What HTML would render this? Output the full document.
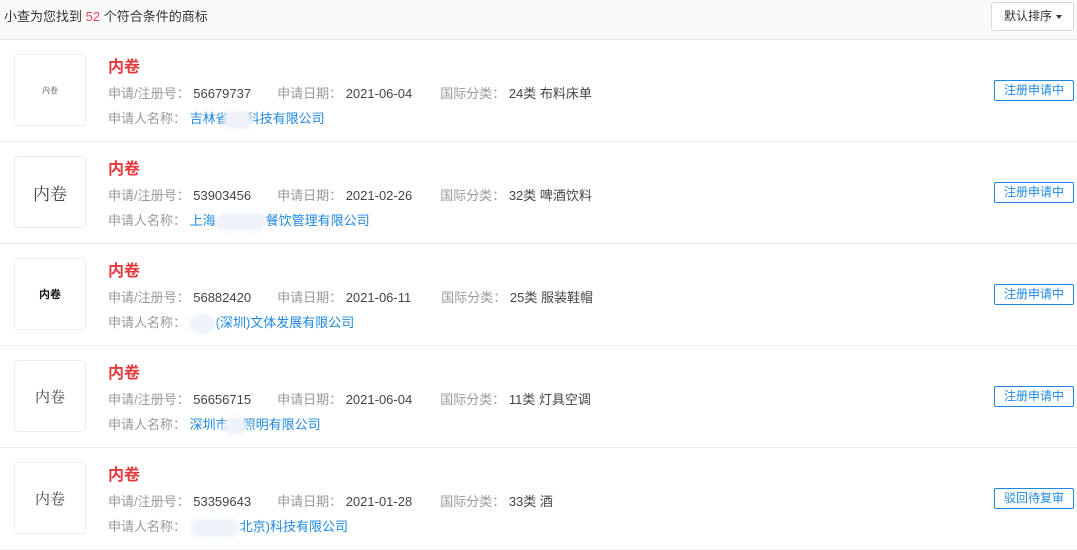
<!DOCTYPE html>
<html><head><meta charset="utf-8"><style>
*{margin:0;padding:0;box-sizing:border-box}
body{width:1077px;height:526px;overflow:hidden;background:#fff;font-family:"Liberation Sans","Noto Sans CJK SC",sans-serif;font-size:13px;color:#333}
.hd{height:40px;background:#fafafa;border-bottom:1px solid #e8e8e8;position:relative}
.hd .t{position:absolute;left:4px;top:6px;font-size:13px;color:#333}
.hd .t b{font-weight:normal;color:#f0475c}
.sort{position:absolute;left:991px;top:2px;width:83px;height:29px;border:1px solid #d9d9d9;border-radius:3px;background:#fff;font-size:12px;line-height:27px;padding-left:12px;color:#333}
.sort i{display:inline-block;width:0;height:0;border-left:3.5px solid transparent;border-right:3.5px solid transparent;border-top:4px solid #333;vertical-align:middle;margin-left:4px}
.row{height:102px;border-bottom:1px solid #eee;position:relative}
.logo{position:absolute;left:14px;top:14px;width:72px;height:72px;border:1px solid #eee;border-radius:4px;display:flex;align-items:center;justify-content:center;font-family:"Noto Serif CJK SC",serif;color:#444}
.name{position:absolute;left:108px;top:13px;font-size:16px;font-weight:bold;color:#e4393c}
.l1{position:absolute;left:108px;top:43px;color:#999;white-space:nowrap}
.l1 span{color:#444}
.l2{position:absolute;left:108px;top:68px;color:#999;white-space:nowrap}
.l2 a{color:#1e88e5;text-decoration:none;position:relative}
.blur{display:inline-block;height:18px;background:#eef3fa;border-radius:9px;vertical-align:middle;filter:blur(2px)}
.tag{position:absolute;left:994px;top:40px;width:80px;height:21px;border:1px solid #1e88e5;border-radius:2px;color:#1e88e5;font-size:12px;line-height:19px;text-align:center}
</style></head><body>
<div class="hd"><div class="t">小查为您找到 <b>52</b> 个符合条件的商标</div><div class="sort">默认排序<i></i></div></div>

<div class="row"><div class="logo" style="font-size:8px">内卷</div><div class="name">内卷</div>
<div class="l1">申请/注册号：&nbsp;<span>56679737</span><span style="display:inline-block;width:26px"></span>申请日期：&nbsp;<span>2021-06-04</span><span style="display:inline-block;width:28px"></span>国际分类：&nbsp;<span>24类 布料床单</span></div>
<div class="l2">申请人名称：&nbsp;<a>吉林省<span class="blur" style="width:30px;margin-left:-6px;margin-right:-6px"></span>科技有限公司</a></div>
<div class="tag">注册申请中</div></div>

<div class="row"><div class="logo" style="font-size:17px">内卷</div><div class="name">内卷</div>
<div class="l1">申请/注册号：&nbsp;<span>53903456</span><span style="display:inline-block;width:26px"></span>申请日期：&nbsp;<span>2021-02-26</span><span style="display:inline-block;width:28px"></span>国际分类：&nbsp;<span>32类 啤酒饮料</span></div>
<div class="l2">申请人名称：&nbsp;<a>上海<span class="blur" style="width:50px"></span>餐饮管理有限公司</a></div>
<div class="tag">注册申请中</div></div>

<div class="row"><div class="logo" style="font-size:11px;font-weight:bold;font-family:'Noto Sans CJK SC',sans-serif;color:#111">内卷</div><div class="name">内卷</div>
<div class="l1">申请/注册号：&nbsp;<span>56882420</span><span style="display:inline-block;width:26px"></span>申请日期：&nbsp;<span>2021-06-11</span><span style="display:inline-block;width:30px"></span>国际分类：&nbsp;<span>25类 服装鞋帽</span></div>
<div class="l2">申请人名称：&nbsp;<a><span class="blur" style="width:26px"></span>(深圳)文体发展有限公司</a></div>
<div class="tag">注册申请中</div></div>

<div class="row"><div class="logo" style="font-size:15px">内卷</div><div class="name">内卷</div>
<div class="l1">申请/注册号：&nbsp;<span>56656715</span><span style="display:inline-block;width:26px"></span>申请日期：&nbsp;<span>2021-06-04</span><span style="display:inline-block;width:28px"></span>国际分类：&nbsp;<span>11类 灯具空调</span></div>
<div class="l2">申请人名称：&nbsp;<a>深圳市<span class="blur" style="width:24px;margin-left:-6px;margin-right:-4px"></span>照明有限公司</a></div>
<div class="tag">注册申请中</div></div>

<div class="row"><div class="logo" style="font-size:15px">内卷</div><div class="name">内卷</div>
<div class="l1">申请/注册号：&nbsp;<span>53359643</span><span style="display:inline-block;width:26px"></span>申请日期：&nbsp;<span>2021-01-28</span><span style="display:inline-block;width:28px"></span>国际分类：&nbsp;<span>33类 酒</span></div>
<div class="l2">申请人名称：&nbsp;<a><span class="blur" style="width:50px"></span>北京)科技有限公司</a></div>
<div class="tag">驳回待复审</div></div>
</body></html>
